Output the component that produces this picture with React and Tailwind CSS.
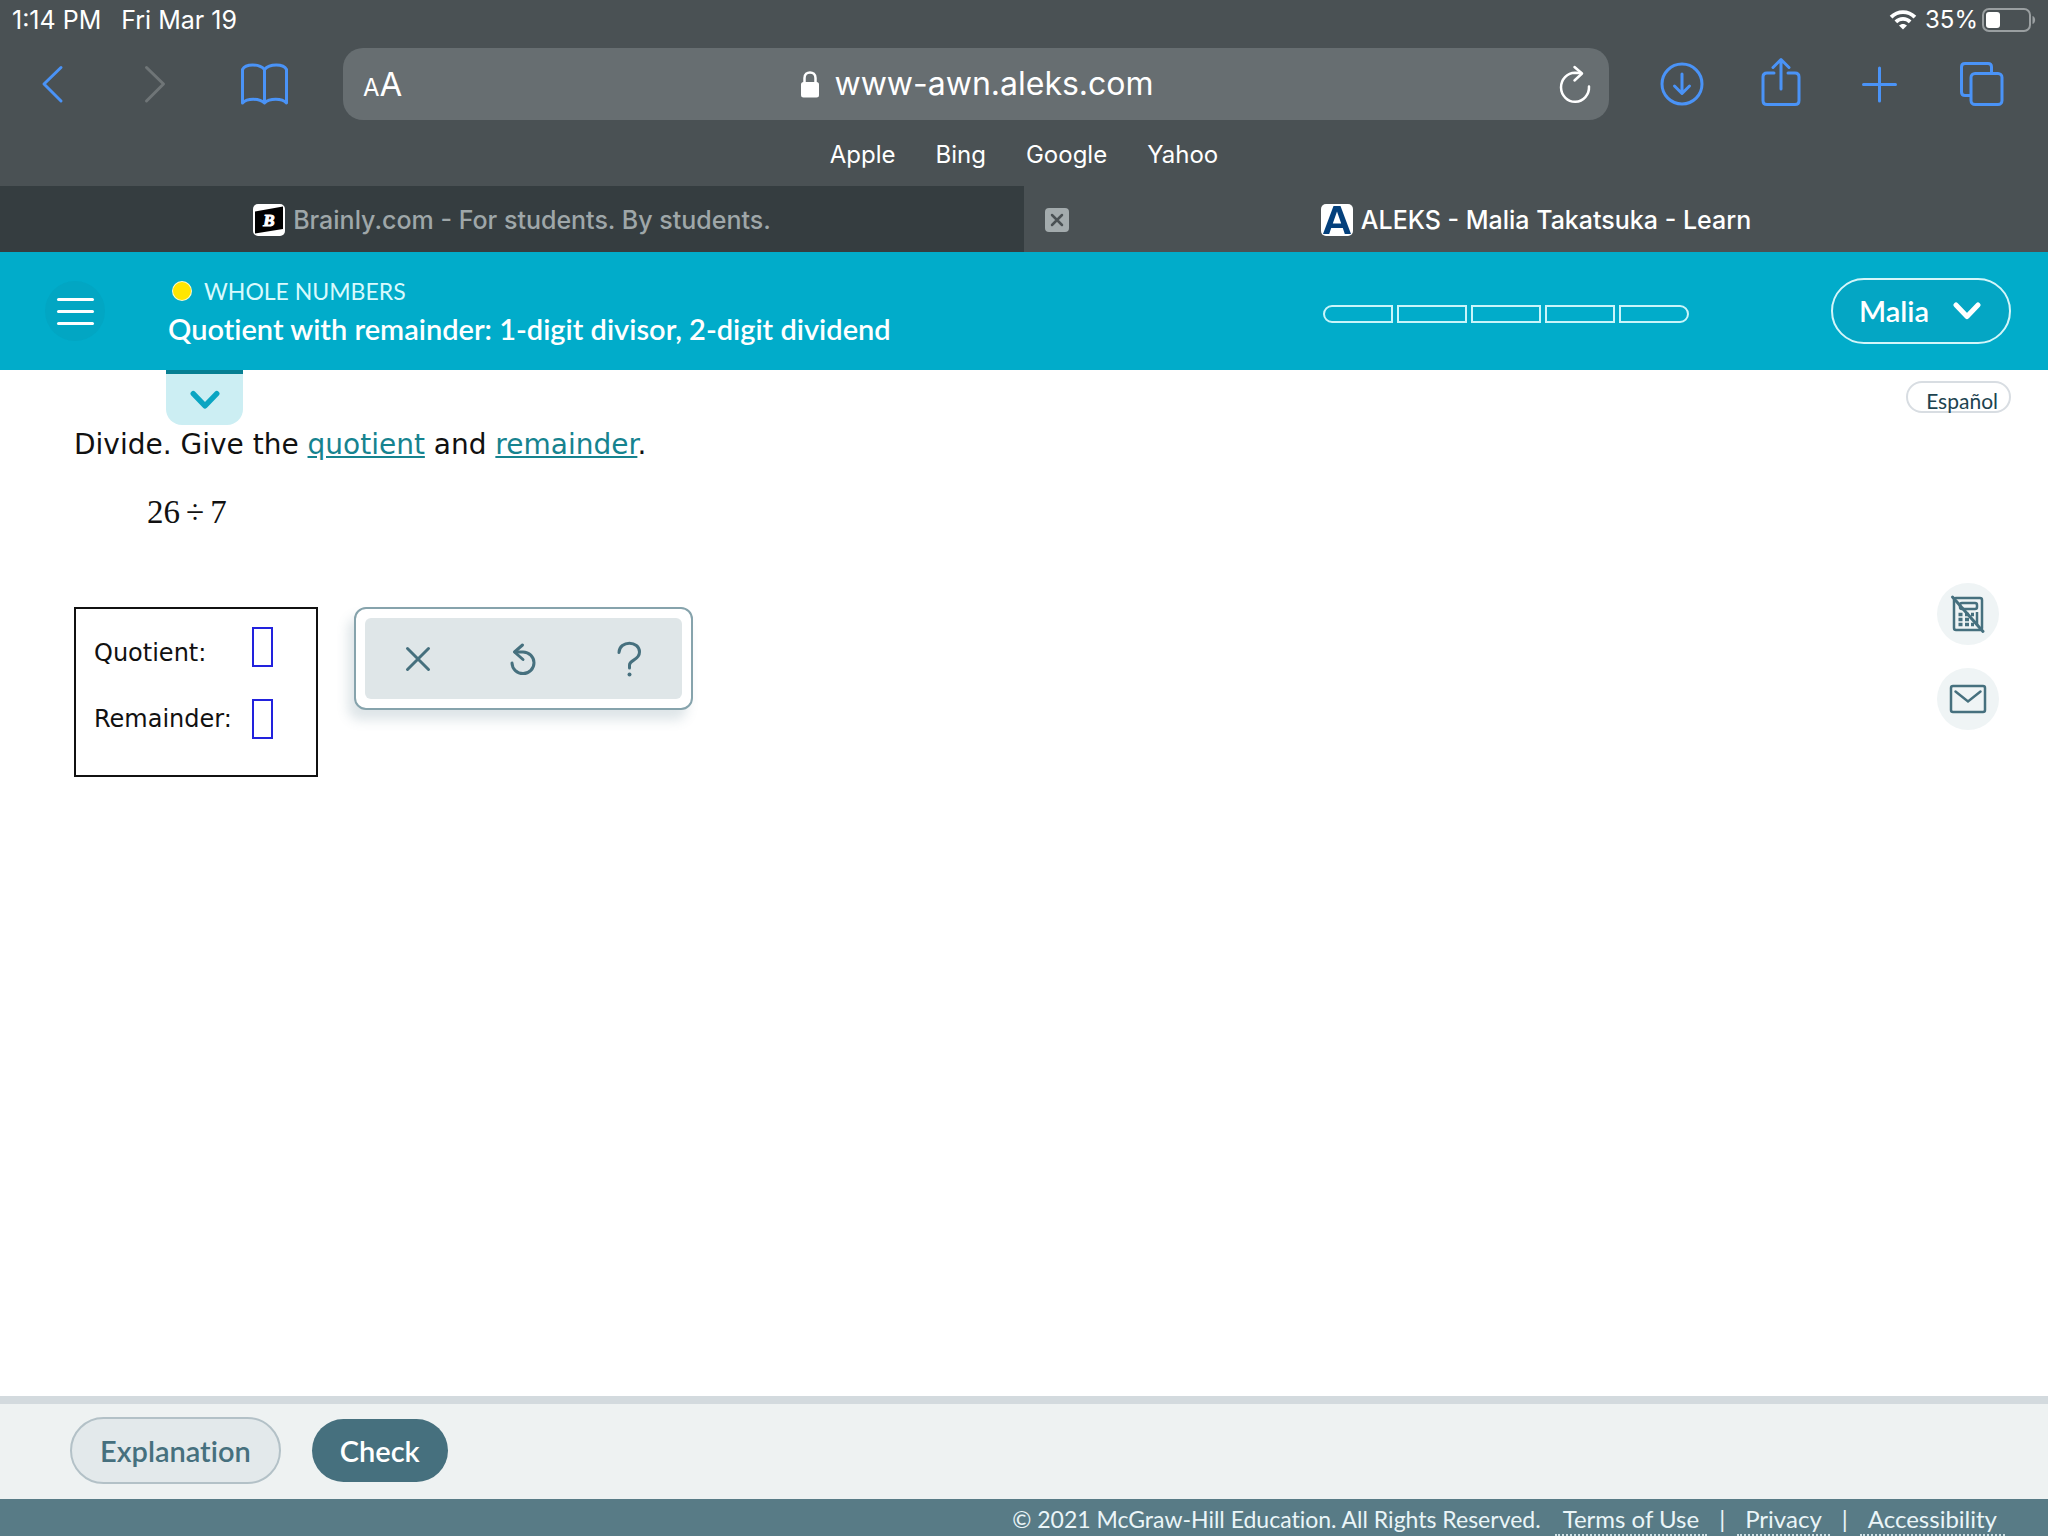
import { useState } from 'react';

const bookmarks = ['Apple', 'Bing', 'Google', 'Yahoo'];

const progressSteps = [1, 2, 3, 4, 5];

const footerLinks = ['Terms of Use', 'Privacy', 'Accessibility'];

function Chevron({ className }) {
  return (
    <svg aria-hidden="true" viewBox="0 0 28 20" fill="none" stroke="currentColor" strokeWidth="5" strokeLinecap="round" strokeLinejoin="round" className={className}>
      <path d="M3 4 L14 15.5 L25 4" />
    </svg>
  );
}

function StatusBar() {
  return (
    <div className="h-10 px-3 flex items-center justify-between text-[25px] leading-6 text-white">
      <div className="flex gap-5">
        <span>1:14 PM</span>
        <span>Fri Mar 19</span>
      </div>
      <div className="flex items-center gap-2 text-[24px]">
        <svg aria-hidden="true" viewBox="0 0 28 21" className="w-7 h-5" fill="none" stroke="currentColor" strokeWidth="4">
          <path d="M1.5 7.5 C8.5 0.5 19.5 0.5 26.5 7.5" />
          <path d="M6.5 12.5 C10.8 8.3 17.2 8.3 21.5 12.5" />
          <path d="M14 20.5 L9.8 16.3 C12.2 14 15.8 14 18.2 16.3 Z" fill="currentColor" stroke="none" />
        </svg>
        <div className="flex items-center gap-1">
          <span>35%</span>
          <svg aria-hidden="true" viewBox="0 0 54 24" className="w-[54px] h-6">
            <rect x="1" y="1" width="47" height="22" rx="6" fill="none" stroke="#9a9fa1" strokeWidth="2" />
            <rect x="4" y="4" width="14" height="16" rx="3" fill="#fff" />
            <path d="M50.5 8 C54 9 54 15 50.5 16 Z" fill="#9a9fa1" />
          </svg>
        </div>
      </div>
    </div>
  );
}

function Toolbar() {
  return (
    <div className="pt-2 pl-10 pr-11 flex items-center text-[#4a93f7]">
      <div className="flex items-center gap-[76px] shrink-0">
        <button aria-label="Back">
          <svg viewBox="0 0 24 40" className="w-6 h-10" fill="none" stroke="currentColor" strokeWidth="3" strokeLinecap="round" strokeLinejoin="round">
            <path d="M21 3.5 L4 20 L21 37" />
          </svg>
        </button>
        <button aria-label="Forward" disabled className="text-[#6f7577]">
          <svg viewBox="0 0 24 40" className="w-6 h-10 overflow-visible" fill="none" stroke="currentColor" strokeWidth="3" strokeLinecap="round" strokeLinejoin="round">
            <path d="M6.5 3.5 L23.5 20 L6.5 37" />
          </svg>
        </button>
        <button aria-label="Bookmarks">
          <svg viewBox="0 0 48 44" className="w-12 h-11" fill="none" stroke="currentColor" strokeWidth="3" strokeLinejoin="round">
            <path d="M24.5 7.5 C19.5 1.5 5.500 1.5 2.500 7.5 V41 C7 36 19.5 36 24.5 41 C29.5 36 42 36 46.5 41 V7.5 C43.5 1.5 29.5 1.5 24.5 7.5 V41" />
          </svg>
        </button>
      </div>

      <div className="flex-1 h-[72px] ml-[55px] mr-[51px] pl-5 pr-[18px] rounded-[20px] bg-[#676e71] flex items-center text-white">
        <div className="flex-1">
          <button aria-label="Text size" className="pt-1 flex items-baseline">
            <span className="text-[24px] leading-10">A</span>
            <span className="text-[33px] leading-10">A</span>
          </button>
        </div>
        <div className="flex items-center gap-[14px]">
          <svg aria-hidden="true" viewBox="0 0 20 28" className="w-5 h-7">
            <rect x="1" y="12" width="18" height="15.5" rx="2.5" fill="currentColor" />
            <path d="M4.500 13 V8 C4.500 0.5 15.5 0.5 15.5 8 V13" fill="none" stroke="currentColor" strokeWidth="2.5" />
          </svg>
          <input
            type="text"
            aria-label="Address"
            defaultValue="www-awn.aleks.com"
            className="field-sizing-content bg-transparent text-[32px] leading-10 outline-none"
          />
        </div>
        <div className="flex-1 flex justify-end">
          <button aria-label="Reload">
            <svg viewBox="0 0 34 40" className="w-[34px] h-10" fill="none" stroke="currentColor" strokeWidth="2.5" strokeLinecap="round" strokeLinejoin="round">
              <path d="M32 22.5 A14 14.5 0 1 1 18 8.8 L24 9" />
              <path d="M17.5 3 L25 9.5 L17.5 16.5" />
            </svg>
          </button>
        </div>
      </div>

      <div className="flex items-center gap-14 shrink-0">
        <button aria-label="Downloads">
          <svg viewBox="0 0 44 48" className="w-11 h-12" fill="none" stroke="currentColor" strokeWidth="3" strokeLinecap="round" strokeLinejoin="round">
            <circle cx="22" cy="24" r="20" />
            <path d="M22 14 V33 M14.5 26 L22 33.5 L29.5 26" />
          </svg>
        </button>
        <button aria-label="Share">
          <svg viewBox="0 0 44 48" className="w-11 h-12 overflow-visible" fill="none" stroke="currentColor" strokeWidth="3" strokeLinecap="round" strokeLinejoin="round">
            <path d="M14 13 H7 Q3 13 3 17 V40.500 Q3 44.500 7 44.500 H35 Q39 44.500 39 40.500 V17 Q39 13 35 13 H28" />
            <path d="M21 29 V0 M13 7.5 L21 -0.5 L29 7.5" />
          </svg>
        </button>
        <button aria-label="New tab">
          <svg viewBox="0 0 44 48" className="w-11 h-12" fill="none" stroke="currentColor" strokeWidth="3" strokeLinecap="round">
            <path d="M19.5 8 V41 M3.5 24.5 H35.5" />
          </svg>
        </button>
        <button aria-label="Show tabs">
          <svg viewBox="0 0 44 48" className="w-11 h-12" fill="none" stroke="currentColor" strokeWidth="3">
            <path d="M10.5 35.5 H5 Q1.5 35.5 1.5 32 V7 Q1.5 3.5 5 3.5 H28 Q31.5 3.5 31.5 7 V13" />
            <rect x="11" y="13.5" width="31" height="31" rx="4" />
          </svg>
        </button>
      </div>
    </div>
  );
}

function BrowserTabs() {
  return (
    <div className="h-[66px] grid grid-cols-2 text-[25px] leading-8 font-medium">
      <div className="pt-0.5 bg-[#353d40] text-[#9fa7a9] flex items-center justify-center gap-2">
        <svg aria-hidden="true" viewBox="0 0 32 32" className="w-8 h-8">
          <rect width="32" height="32" rx="5" fill="#fff" />
          <path d="M2 7.5 L30 2.5 V25 L2 29.5 Z" fill="#000" />
          <text x="16" y="22" textAnchor="middle" fill="#fff" stroke="#fff" className="font-['Liberation_Serif'] text-[17px] font-bold italic">B</text>
        </svg>
        <span>Brainly.com - For students. By students.</span>
      </div>
      <div className="pt-0.5 px-[21px] flex items-center text-white">
        <button aria-label="Close tab" className="w-6 h-6 rounded-sm bg-[#a3abad] text-[#4a5154]">
          <svg viewBox="0 0 24 24" className="w-6 h-6" fill="none" stroke="currentColor" strokeWidth="2.5" strokeLinecap="round">
            <path d="M7 7 L17 17 M17 7 L7 17" />
          </svg>
        </button>
        <div className="flex-1 pr-6 flex items-center justify-center gap-2">
          <svg aria-hidden="true" viewBox="0 0 32 32" className="w-8 h-8">
            <rect width="32" height="32" rx="5" fill="#fff" />
            <path d="M12.5 2 H19.5 L30 30 H23.8 L21.800 24 H10.200 L8.200 30 H2 Z M16 7.5 L11.800 19.5 H20.200 Z" fill="#04407c" fillRule="evenodd" />
          </svg>
          <span>ALEKS - Malia Takatsuka - Learn</span>
        </div>
      </div>
    </div>
  );
}

function LessonHeader() {
  return (
    <header className="h-[118px] pl-[45px] pr-[37px] bg-[#01acca] text-white flex items-center font-['Lato',sans-serif] [font-variant-ligatures:none]">
      <button aria-label="Menu" className="w-[60px] h-[60px] rounded-full bg-[#02a6c3] flex flex-col items-center justify-center gap-[9px]">
        <span className="w-[37px] h-[3px] rounded-full bg-white" />
        <span className="w-[37px] h-[3px] rounded-full bg-white" />
        <span className="w-[37px] h-[3px] rounded-full bg-white" />
      </button>
      <div className="ml-[63px] flex-1">
        <div className="pl-1 flex items-center gap-3 text-[23px] leading-9 text-[#d9fafd]">
          <span className="w-5 h-5 rounded-full border border-white/80 bg-[#ffe600]" />
          WHOLE NUMBERS
        </div>
        <h1 className="text-[29px] leading-10 font-semibold">Quotient with remainder: 1-digit divisor, 2-digit dividend</h1>
      </div>
      <div className="mt-[6px] mr-[142px] flex gap-1" role="img" aria-label="Progress 0 of 5">
        {progressSteps.map((step) => (
          <span key={step} className="w-[70px] h-[18px] border-2 border-[#c9f5fa] first:rounded-l-full last:rounded-r-full" />
        ))}
      </div>
      <button className="w-[180px] h-[66px] pl-[26px] pr-7 rounded-full border-2 border-[#d3f6fa] bg-[#04a6c4] flex items-center justify-between text-[29px] leading-9 font-semibold">
        Malia
        <Chevron className="w-7 h-5" />
      </button>
    </header>
  );
}

function AnswerInput({ id, value, onChange }) {
  return (
    <input
      id={id}
      type="text"
      value={value}
      onChange={(e) => onChange(e.target.value)}
      className="w-[21px] h-10 border-2 border-[#2222dd] text-center outline-none"
    />
  );
}

function Question() {
  const [quotient, setQuotient] = useState('');
  const [remainder, setRemainder] = useState('');

  return (
    <section className="pt-[2px] pl-[74px] font-['DejaVu_Sans',sans-serif] text-[#111]">
      <p className="text-[28px] leading-9">
        Divide. Give the <a href="#quotient" className="text-[#16838f] underline underline-offset-2">quotient</a> and{' '}
        <a href="#remainder" className="text-[#16838f] underline underline-offset-2">remainder</a>.
      </p>
      <p className="mt-[29px] ml-[73px] flex gap-[6px] font-['Liberation_Serif',serif] text-[33px] leading-10">
        <span>26</span>
        <span>÷</span>
        <span>7</span>
      </p>

      <div className="mt-[75px] flex items-start gap-9">
        <div className="w-[244px] pt-[18px] pb-9 pl-[18px] pr-[43px] border-2 border-[#111] flex justify-between">
          <div className="pt-[10px] flex flex-col gap-[34px] text-[24px] leading-8">
            <label htmlFor="quotient">Quotient:</label>
            <label htmlFor="remainder">Remainder:</label>
          </div>
          <div className="flex flex-col gap-8">
            <AnswerInput id="quotient" value={quotient} onChange={setQuotient} />
            <AnswerInput id="remainder" value={remainder} onChange={setRemainder} />
          </div>
        </div>

        <div className="p-[9px] rounded-xl border-2 border-[#86a3ac] bg-white shadow-[-6px_10px_12px_rgba(70,112,126,0.18)]">
          <div className="w-[317px] h-[81px] rounded-md bg-[#dfe6e8] grid grid-cols-3 place-items-center text-[#46707e]">
            <button aria-label="Clear">
              <svg viewBox="0 0 36 36" className="w-9 h-9" fill="none" stroke="currentColor" strokeWidth="3" strokeLinecap="round">
                <path d="M7.5 7.5 L28.5 28.5 M28.5 7.5 L7.5 28.5" />
              </svg>
            </button>
            <button aria-label="Undo">
              <svg viewBox="0 0 36 36" className="w-9 h-9" fill="none" stroke="currentColor" strokeWidth="3" strokeLinecap="round" strokeLinejoin="round">
                <path d="M17.5 4 L9.5 11 L18 18.5" />
                <path d="M10 11 H18 A11 10.8 0 1 1 7 22" />
              </svg>
            </button>
            <button aria-label="Help">
              <svg viewBox="0 0 36 36" className="w-9 h-9" fill="none" stroke="currentColor" strokeWidth="3" strokeLinecap="round">
                <path d="M8 11.5 C8.500 -1 28.5 -0.5 28.5 11 C28.5 19.5 18.5 18.5 18.5 24 V27" />
                <path d="M18.5 33.4 V33.5" strokeWidth="4" />
              </svg>
            </button>
          </div>
        </div>
      </div>
    </section>
  );
}

function SideTools() {
  return (
    <aside className="mt-[158px] mr-[49px] flex flex-col gap-[23px] text-[#46707e]">
      <button aria-label="Calculator not available" className="w-[62px] h-[62px] rounded-full bg-[#eff4f5] flex items-center justify-center">
        <svg viewBox="0 0 36 40" className="w-9 h-10" fill="none" stroke="currentColor" strokeWidth="2.5">
          <rect x="4" y="4" width="28" height="32" rx="2" />
          <rect x="10" y="9" width="17" height="6" rx="2" />
          <path d="M8.500 20.5 h4 M15 20.5 h4 M21 20.5 h3 M8.500 25.5 h4 M15 25.5 h4 M8.500 30.5 h4 M15 30.5 h4 M21 30.5 h3" strokeWidth="3.5" />
          <path d="M27 18 V31" />
          <path d="M2.500 3 L33 37.5" strokeWidth="3" strokeLinecap="round" />
        </svg>
      </button>
      <button aria-label="Messages" className="w-[62px] h-[62px] rounded-full bg-[#eff4f5] flex items-center justify-center">
        <svg viewBox="0 0 38 30" className="w-[38px] h-[30px]" fill="none" stroke="currentColor" strokeWidth="2.5" strokeLinecap="round">
          <rect x="2" y="2" width="34" height="26" rx="2" />
          <path d="M6.500 7.5 L19 17.5 L31.500 7.5" />
        </svg>
      </button>
    </aside>
  );
}

export default function App() {
  return (
    <div className="min-h-screen bg-white flex flex-col font-['Inter',sans-serif]">
      {/* Safari */}
      <div className="bg-[#4a5154]">
        <StatusBar />
        <Toolbar />
        <nav className="h-[66px] pt-[3px] flex items-center justify-center gap-10 text-[24px] leading-8 text-white">
          {bookmarks.map((name) => (
            <a key={name} href={`#${name.toLowerCase()}`}>{name}</a>
          ))}
        </nav>
        <BrowserTabs />
      </div>

      <LessonHeader />

      {/* Lesson */}
      <main className="flex-1">
        <div className="pl-[166px] pr-[37px] flex items-start justify-between font-['Lato',sans-serif]">
          <button aria-label="Show lesson details" className="w-[77px] h-[55px] rounded-b-2xl border-t-4 border-[#077f92] bg-[#cceef3] text-[#0aa5c2] flex items-center justify-center">
            <Chevron className="w-[30px] h-[22px]" />
          </button>
          <button className="mt-[11px] h-8 pl-[18px] pr-[11px] pt-0.5 rounded-full border-2 border-[#d8dde2] text-[21px] leading-8 text-[#1d4350]">Español</button>
        </div>
        <div className="flex items-start justify-between">
          <Question />
          <SideTools />
        </div>
      </main>

      <div className="pt-[13px] pb-[15px] pl-[70px] border-t-8 border-[#d3dade] bg-[#eef2f2] flex items-center gap-[31px] font-['Lato',sans-serif] [font-variant-ligatures:none] text-[29px] leading-9 font-semibold">
        <button className="h-[67px] px-7 rounded-full border-2 border-[#b3c1c7] bg-[#e3e9eb] text-[#46707e]">Explanation</button>
        <button className="h-[63px] px-7 rounded-full bg-[#46707e] text-white">Check</button>
      </div>

      <footer className="pt-1 pr-[43px] bg-[#587b86] text-[#eaf5f8] flex justify-end font-['Lato',sans-serif] [font-variant-ligatures:none] text-[23px] leading-8">
        <span>© 2021 McGraw-Hill Education. All Rights Reserved.</span>
        <ul className="ml-[14px] flex text-[24px]">
          {footerLinks.map((name) => (
            <li key={name} className="group flex">
              <a href="#legal" className="px-2 border-b-2 border-dotted border-[#cfe0e5] leading-[31px]">{name}</a>
              <span className="mx-3 group-last:hidden">|</span>
            </li>
          ))}
        </ul>
      </footer>
    </div>
  );
}
